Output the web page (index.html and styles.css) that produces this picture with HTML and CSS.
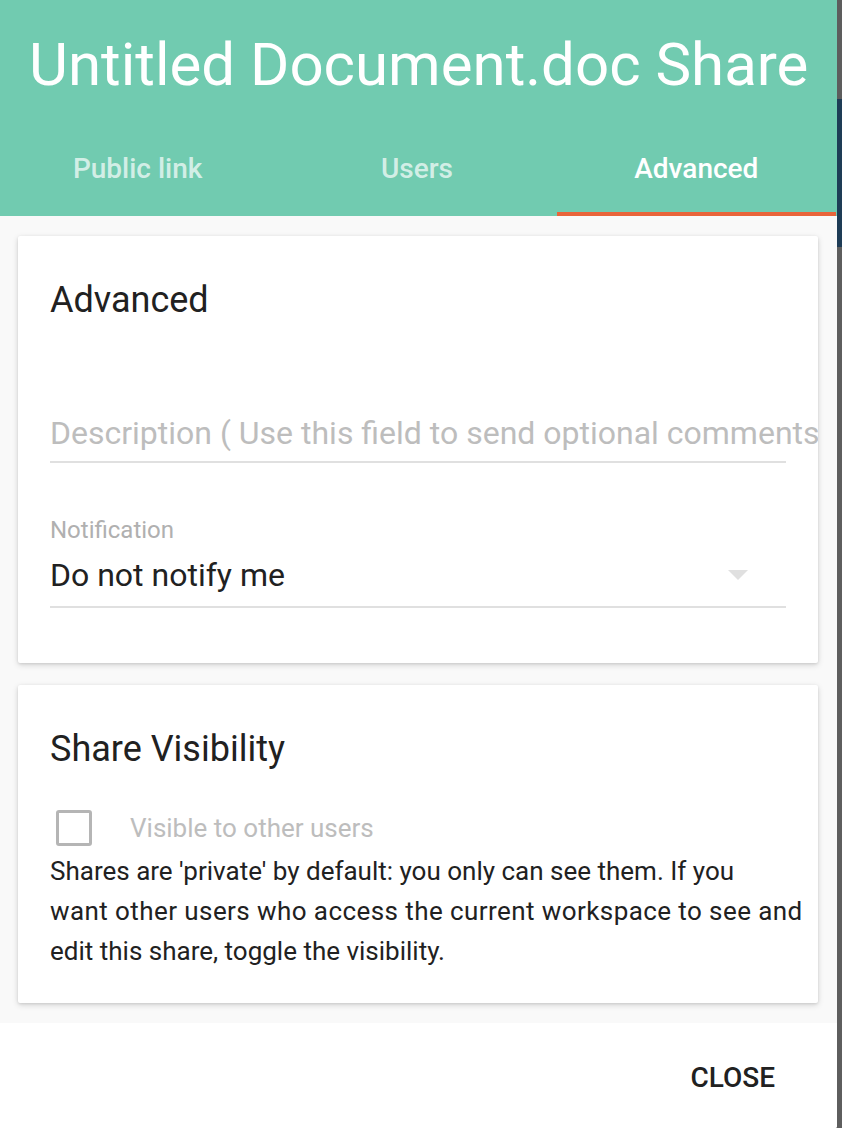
FILE: index.html
```html
<!DOCTYPE html>
<html>
<head>
<meta charset="utf-8">
<link rel="stylesheet" href="styles.css">
</head>
<body>
<div class="dialog">
  <div class="header">
    <div class="title">Untitled Document.doc Share</div>
    <div class="tabs">
      <div class="tab">Public link</div>
      <div class="tab">Users</div>
      <div class="tab active">Advanced</div>
    </div>
  </div>
  <div class="content">
    <div class="card card-advanced">
      <div class="card-title">Advanced</div>
      <div class="field desc">
        <div class="placeholder">Description ( Use this field to send optional comments to the recipients )</div>
      </div>
      <div class="label">Notification</div>
      <div class="field select">
        <div class="value">Do not notify me</div>
        <span class="arrow"></span>
      </div>
    </div>
    <div class="card card-visibility">
      <div class="card-title">Share Visibility</div>
      <div class="check-row">
        <span class="checkbox"></span>
        <span class="check-label">Visible to other users</span>
      </div>
      <p class="help">Shares are 'private' by default: you only can see them. If you<br><span class="wide">want other users who access the current workspace to see and</span><br>edit this share, toggle the visibility.</p>
    </div>
  </div>
  <div class="actions">
    <span class="btn">CLOSE</span>
  </div>
</div>
<div class="backdrop"></div>
</body>
</html>
```

FILE: styles.css
```css
html, body {
  margin: 0;
  padding: 0;
  height: 1128px;
  overflow: hidden;
}
body {
  display: flex;
  font-family: Roboto, "Liberation Sans", sans-serif;
  background: #5e5e5e;
}
.dialog {
  width: 837px;
  height: 1128px;
  display: flex;
  flex-direction: column;
  background: #ffffff;
  border-radius: 0 0 2px 0;
  overflow: hidden;
}
.backdrop {
  flex: 1;
  background: linear-gradient(to bottom, #5d5d5d 0, #5d5d5d 99px, #1e3c56 99px, #1e3c56 247px, #5e5e5e 247px);
}
.header {
  background: #71cbb0;
  height: 216px;
  display: flex;
  flex-direction: column;
}
.title {
  height: 120px;
  box-sizing: border-box;
  padding: 35px 0 0 29px;
  font-size: 60px;
  line-height: 60px;
  color: #ffffff;
  white-space: nowrap;
}
.tabs {
  display: flex;
  height: 96px;
  margin-left: -2px;
  width: 838px;
}
.tab {
  flex: 1;
  text-align: center;
  font-size: 28px;
  font-weight: 500;
  line-height: 94px;
  color: rgba(255, 255, 255, 0.7);
  box-sizing: border-box;
  border-bottom: 4px solid transparent;
  padding-top: 2px;
}
.tab.active {
  color: #ffffff;
  border-bottom-color: #e8643a;
}
.content {
  background: #f9f9f9;
  padding: 20px 19px 20px 18px;
  display: flex;
  flex-direction: column;
  gap: 22px;
}
.card {
  background: #ffffff;
  box-shadow: 0 2px 6px rgba(0, 0, 0, 0.14), 0 1px 3px rgba(0, 0, 0, 0.1);
  padding: 42px 32px 0 32px;
  overflow: hidden;
  border-radius: 2px;
}
.card-advanced {
  height: 427px;
  box-sizing: border-box;
}
.card-visibility {
  height: 318px;
  box-sizing: border-box;
}
.card-title {
  font-size: 36px;
  line-height: 44px;
  color: #212121;
}
.field {
  border-bottom: 2px solid #e0e0e0;
}
.desc {
  margin-top: 91px;
  padding-bottom: 8px;
}
.placeholder {
  font-size: 32px;
  line-height: 40px;
  color: #bdbdbd;
  white-space: nowrap;
}
.label {
  margin-top: 53px;
  font-size: 24px;
  line-height: 28px;
  color: #b0b0b0;
}
.select {
  margin-top: 11px;
  padding-bottom: 11px;
  display: flex;
  align-items: center;
  justify-content: space-between;
}
.value {
  font-size: 32px;
  line-height: 40px;
  color: #212121;
}
.arrow {
  width: 0;
  height: 0;
  border-left: 10px solid transparent;
  border-right: 10px solid transparent;
  border-top: 10px solid #e0e0e0;
  margin-right: 38px;
}
.check-row {
  margin-top: 39px;
  display: flex;
  align-items: center;
  height: 36px;
}
.checkbox {
  width: 36px;
  height: 36px;
  box-sizing: border-box;
  border: 3.5px solid #b5b5b5;
  border-radius: 3px;
  margin-left: 6px;
}
.check-label {
  margin-left: 38px;
  font-size: 26px;
  line-height: 30px;
  color: #bdbdbd;
}
.help {
  margin: 5px -40px 0 0;
  font-size: 26px;
  line-height: 40px;
  color: #212121;
  white-space: nowrap;
}
.wide {
  letter-spacing: 0.42px;
}
.actions {
  flex: 1;
  background: #ffffff;
  text-align: right;
  padding: 19px 62px 0 0;
}
.btn {
  display: inline-block;
  font-size: 28px;
  font-weight: 500;
  line-height: 72px;
  color: #212121;
}
```
